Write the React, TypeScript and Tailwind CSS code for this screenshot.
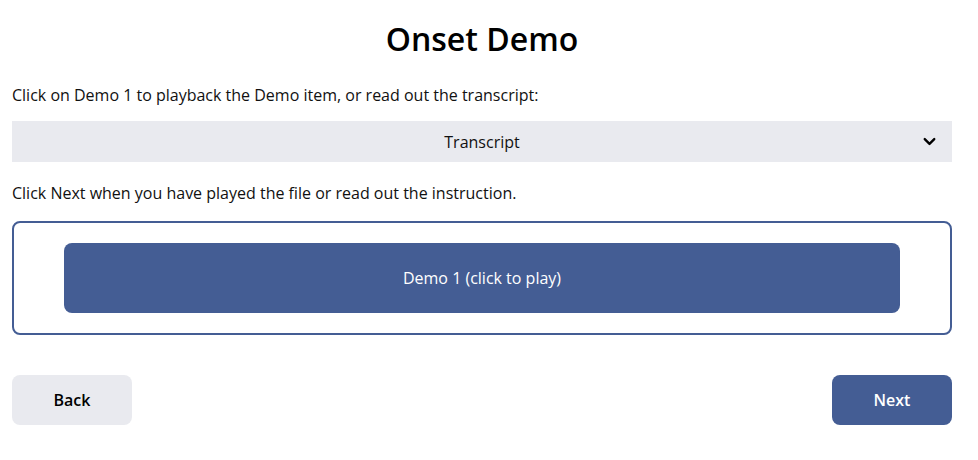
import { ChevronDown } from "lucide-react"

export default function App() {
  return (
    <div className="min-h-screen bg-white font-['Open_Sans',sans-serif] text-[#111]">
      <div className="ml-3 w-[940px]">
        <h1 className="pt-[18px] text-center text-[32px] font-semibold leading-[42px] text-black">Onset Demo</h1>
        <p className="mt-[24px] text-base leading-[22px]">
          Click on Demo 1 to playback the Demo item, or read out the transcript:
        </p>
        <div className="relative mt-[15px] flex h-[41px] items-center justify-center bg-[#e9eaef] text-base">
          <span>Transcript</span>
          <ChevronDown className="absolute right-[13px] top-[11px] size-[19px] text-black" strokeWidth={3} />
        </div>
        <p className="mt-[20px] text-base leading-[22px]">
          Click Next when you have played the file or read out the instruction.
        </p>
        <div className="mt-[17px] h-[114px] rounded-lg border-2 border-[#445d94] px-[50px] pt-5">
          <button className="flex h-[70px] w-full items-center justify-center rounded-lg bg-[#445d94] text-base text-white">
            Demo 1 (click to play)
          </button>
        </div>
        <div className="mt-[40px] flex justify-between">
          <button className="h-[50px] w-[120px] rounded-lg bg-[#e9eaef] text-base font-semibold text-black">Back</button>
          <button className="h-[50px] w-[120px] rounded-lg bg-[#445d94] text-base font-semibold text-white">Next</button>
        </div>
      </div>
    </div>
  )
}
